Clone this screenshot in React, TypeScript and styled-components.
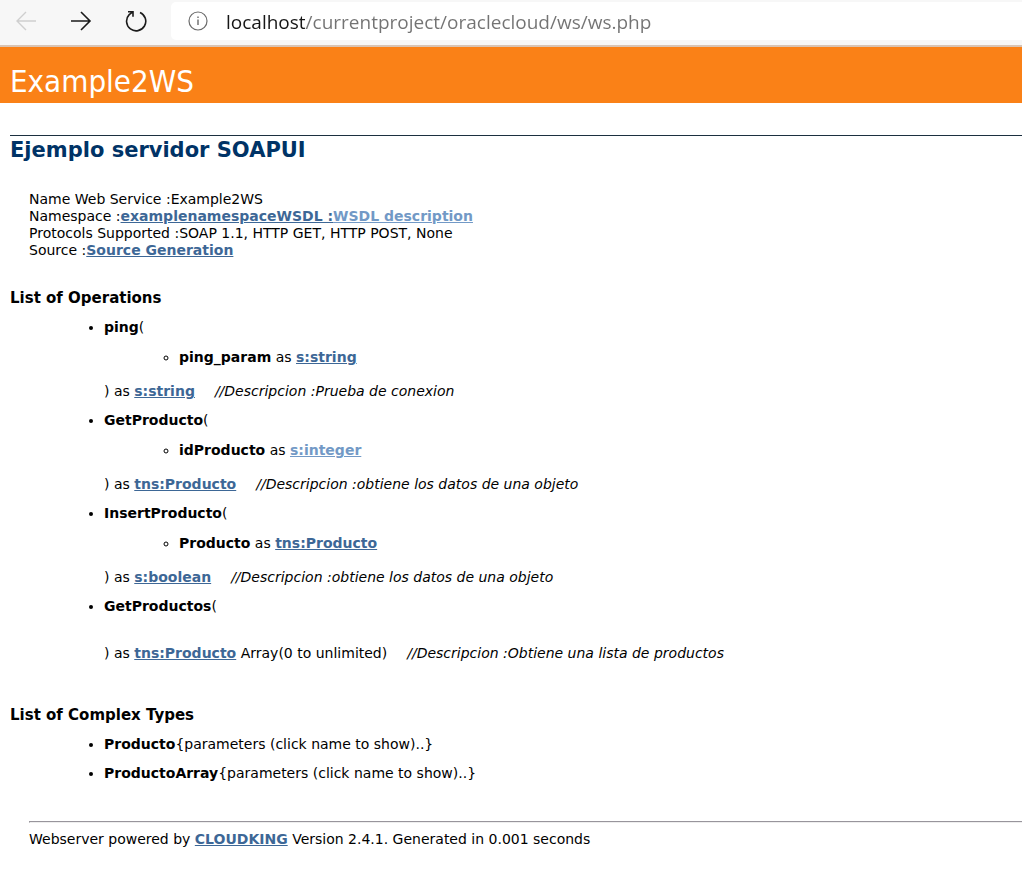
import React, { useState } from "react";
import styled, { createGlobalStyle } from "styled-components";

const GlobalStyle = createGlobalStyle`
  *, *::before, *::after { box-sizing: border-box; }
  body {
    margin: 0;
    background: #fff;
    color: #000;
    font-family: Verdana, "DejaVu Sans", sans-serif;
    font-size: 14px;
    line-height: 17px;
  }
`;

const BrowserBar = styled.header`
  display: flex;
  align-items: center;
  height: 47px;
  padding: 0 0 3px 12px;
  background: #f7f7f7;
  border-bottom: 2px solid #d9c4b4;
`;

const NavButton = styled.button`
  display: flex;
  align-items: center;
  justify-content: center;
  width: 28px;
  height: 28px;
  margin-right: 27px;
  padding: 0;
  border: 0;
  background: none;
  color: #1b1b1b;
  &:disabled { color: #cfcfcf; }
`;

const AddressBox = styled.label`
  display: flex;
  flex: 1;
  align-items: center;
  gap: 18px;
  height: 38px;
  margin-left: -6px;
  padding-left: 17px;
  background: #fff;
  border-radius: 5px 0 0 5px;
  color: #6b6b6b;
`;

const AddressInput = styled.input`
  flex: 1;
  min-width: 0;
  height: 32px;
  padding: 2px 0 0;
  border: 0;
  outline: 0;
  color: transparent;
  background: linear-gradient(to right, #161616 79px, #737373 79px);
  background-clip: text;
  font-family: "Segoe UI", "Open Sans", sans-serif;
  font-size: 19px;
`;

const Banner = styled.div`
  display: flex;
  align-items: flex-end;
  height: 56px;
  padding: 0 10px 2px;
  background: #fa8117;
`;

const Title = styled.h1`
  margin: 0;
  color: #fff;
  font-family: Tahoma, "DejaVu Sans Condensed", sans-serif;
  font-size: 31px;
  font-weight: 400;
  line-height: 40px;
`;

const Content = styled.main`
  padding: 32px 0 32px 10px;
`;

const Subtitle = styled.h2`
  margin: 0 0 26px;
  border-top: 1px solid #1c3040;
  color: #003366;
  font-size: 21px;
  line-height: 29px;
`;

const Info = styled.div`
  padding-left: 19px;
`;

const SectionTitle = styled.h3`
  margin: 0;
  padding: 30px 0 12px;
  font-size: 15px;
  line-height: 18px;
`;

const OperationList = styled.ul`
  margin: 0 0 14px;
  padding: 0 0 0 94px;
  list-style: disc;
`;

const Entry = styled.li`
  margin-bottom: 12px;
`;

const ParamList = styled.ul`
  margin: 0;
  padding: 13px 0 17px 75px;
  list-style: circle;
`;

const TypeLink = styled.a<{ $light?: boolean }>`
  color: ${(p) => (p.$light ? "#7299c6" : "#3d6796")};
  font-weight: 700;
  text-decoration: underline;
`;

const Description = styled.em`
  margin-left: 20px;
`;

const NameButton = styled.button`
  padding: 0;
  border: 0;
  background: none;
  color: inherit;
  font: inherit;
  font-weight: 700;
  cursor: pointer;
`;

const Footer = styled.footer`
  padding: 17px 0 0 19px;
`;

const Rule = styled.hr`
  margin: 8px 0;
  border: 1px solid;
  border-color: #98959c #fff #eeeeee #98959c;
  border-right: 0;
`;

type Operation = {
  name: string;
  param?: { name: string; type: string; light?: boolean };
  result: string;
  suffix?: string;
  text: string;
};

const operations: Operation[] = [
  { name: "ping", param: { name: "ping_param", type: "s:string" }, result: "s:string", text: "Prueba de conexion" },
  { name: "GetProducto", param: { name: "idProducto", type: "s:integer", light: true }, result: "tns:Producto", text: "obtiene los datos de una objeto" },
  { name: "InsertProducto", param: { name: "Producto", type: "tns:Producto" }, result: "s:boolean", text: "obtiene los datos de una objeto" },
  { name: "GetProductos", result: "tns:Producto", suffix: " Array(0 to unlimited)", text: "Obtiene una lista de productos" },
];

const complexTypes = ["Producto", "ProductoArray"];

const BackIcon = () => (
  <svg width="22" height="22" viewBox="0 0 22 22" fill="none" stroke="currentColor" strokeWidth="1.4">
    <path d="M21 11H2M11 2L2 11l9 9" />
  </svg>
);

const ForwardIcon = () => (
  <svg width="22" height="22" viewBox="0 0 22 22" fill="none" stroke="currentColor" strokeWidth="1.6">
    <path d="M1 11h19M11 2l9 9-9 9" />
  </svg>
);

const ReloadIcon = () => (
  <svg width="22" height="22" viewBox="0 0 22 22" fill="none" stroke="currentColor" strokeWidth="1.6">
    <path d="M15 2.4A9.6 9.6 0 1 1 4.2 4.6L7.8 1.8M3 1.8h5v5" />
  </svg>
);

const InfoIcon = () => (
  <svg width="20" height="20" viewBox="0 0 20 20" fill="none" stroke="currentColor" strokeWidth="1.2">
    <circle cx="10" cy="10" r="9" />
    <path d="M10 8.5V14M10 5.5v1.6" strokeWidth="1.4" />
  </svg>
);

export default function App() {
  const [address, setAddress] = useState("localhost/currentproject/oraclecloud/ws/ws.php");
  return (
    <>
      <GlobalStyle />
      <BrowserBar>
        <NavButton aria-label="Back" disabled><BackIcon /></NavButton>
        <NavButton aria-label="Forward"><ForwardIcon /></NavButton>
        <NavButton aria-label="Reload"><ReloadIcon /></NavButton>
        <AddressBox>
          <InfoIcon />
          <AddressInput aria-label="Address" value={address} onChange={(e) => setAddress(e.target.value)} />
        </AddressBox>
      </BrowserBar>
      <Banner>
        <Title>Example2WS</Title>
      </Banner>
      <Content>
        <Subtitle>Ejemplo servidor SOAPUI</Subtitle>
        <Info>
          <div>Name Web Service :Example2WS</div>
          <div>
            Namespace :<TypeLink href="#namespace">examplenamespaceWSDL :</TypeLink>
            <TypeLink href="#wsdl" $light>WSDL description</TypeLink>
          </div>
          <div>Protocols Supported :SOAP 1.1, HTTP GET, HTTP POST, None</div>
          <div>Source :<TypeLink href="#source">Source Generation</TypeLink></div>
        </Info>
        <SectionTitle>List of Operations</SectionTitle>
        <OperationList>
          {operations.map((op) => (
            <Entry key={op.name}>
              <strong>{op.name}</strong>(
              <ParamList>
                {op.param && (
                  <li>
                    <strong>{op.param.name}</strong> as{" "}
                    <TypeLink href="#type" $light={op.param.light}>{op.param.type}</TypeLink>
                  </li>
                )}
              </ParamList>
              ) as <TypeLink href="#type">{op.result}</TypeLink>
              {op.suffix}
              <Description>//Descripcion :{op.text}</Description>
            </Entry>
          ))}
        </OperationList>
        <SectionTitle>List of Complex Types</SectionTitle>
        <OperationList>
          {complexTypes.map((name) => (
            <Entry key={name}>
              <NameButton>{name}</NameButton>
              {"{parameters (click name to show)..}"}
            </Entry>
          ))}
        </OperationList>
        <Footer>
          <Rule />
          Webserver powered by <TypeLink href="#cloudking">CLOUDKING</TypeLink> Version 2.4.1. Generated in 0.001 seconds
        </Footer>
      </Content>
    </>
  );
}
